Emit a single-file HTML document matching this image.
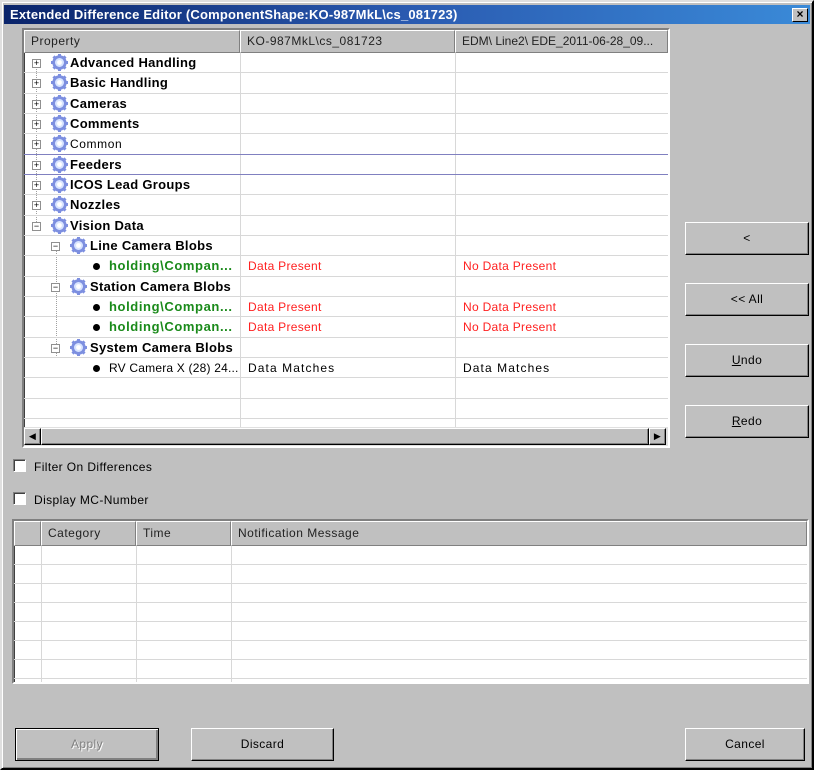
<!DOCTYPE html>
<html><head><style>
*{box-sizing:border-box;margin:0;padding:0}
body{width:814px;height:770px;background:#c0c0c0;font-family:"Liberation Sans","DejaVu Sans",sans-serif;font-size:12px;position:relative;overflow:hidden;color:#000}
.abs{position:absolute}
.win{position:absolute;left:0;top:0;width:814px;height:770px;border:2px solid;border-color:#dfdfdf #000 #000 #dfdfdf;box-shadow:inset 1px 1px #fff,inset -1px -1px #808080}
.title{position:absolute;left:4px;top:5px;width:806px;height:19px;background:linear-gradient(to right,#0a246a,#2a5ab0 50%,#3a8ad8);color:#fff;font-weight:bold;font-size:13px;line-height:19px;padding-left:6px;letter-spacing:0.2px}
.close{position:absolute;right:6px;top:8px;width:16px;height:14px;background:#c0c0c0;border:1px solid;border-color:#fff #000 #000 #fff;font-size:12px;line-height:11px;text-align:center;font-weight:bold;color:#000}
.sunken{border:2px solid;border-color:#808080 #fff #fff #808080;box-shadow:inset 1px 1px #404040}
.btn{position:absolute;background:#c0c0c0;border:1px solid;border-color:#fff #000 #000 #fff;box-shadow:inset -1px -1px #808080;text-align:center;font-size:12px;letter-spacing:0.4px}
.hdr{position:absolute;top:0;height:23px;background:#c0c0c0;border:1px solid;border-color:#fff #808080 #808080 #fff;line-height:21px;padding-left:6px;color:#222;letter-spacing:0.5px;white-space:nowrap;overflow:hidden}
.row{position:absolute;left:0;height:20.33px;width:644px;border-bottom:1px solid #d8d8d8}
.c{position:absolute;top:0;height:20px;line-height:20px;white-space:nowrap;letter-spacing:1.1px}
.vl{position:absolute;top:0;bottom:0;width:1px;background:#d8d8d8}
.b{font-weight:bold;font-size:13px;letter-spacing:0.3px}
.g{color:#1a8a1a;letter-spacing:0.6px}
.r{color:#ff2020;letter-spacing:0.3px}
.exp{position:absolute;width:9px;height:9px;border:1px solid #909090;background:#fff;font-size:9px;line-height:7px;text-align:center;top:6px;color:#000}
.gear{position:absolute;top:1px;width:17px;height:17px}
.dot{position:absolute;top:7px;width:7px;height:7px;border-radius:50%;background:#000}
.cb{position:absolute;width:13px;height:13px;background:#fff;border:1px solid;border-color:#808080 #fff #fff #808080;box-shadow:inset 1px 1px #404040}
.dl{position:absolute;border-left:1px dotted #a0a0a0;border-bottom:1px dotted #a0a0a0}
</style></head><body>
<div class="win"></div>
<div class="title">Extended Difference Editor (ComponentShape:KO-987MkL\cs_081723)</div>
<div class="close">×</div>

<div class="abs sunken" style="left:22px;top:28px;width:648px;height:420px;background:#fff">
 <div class="abs" style="left:0;top:0;width:644px;height:416px;overflow:hidden">
  <div class="hdr" style="left:0;width:216px">Property</div>
  <div class="hdr" style="left:216px;width:215px">KO-987MkL\cs_081723</div>
  <div class="hdr" style="left:431px;width:213px;letter-spacing:0">EDM\ Line2\ EDE_2011-06-28_09...</div>
  <div class="abs" style="left:0;top:23px;width:644px;height:374px">
   <div class="vl" style="left:216px"></div><div class="vl" style="left:431px"></div>
   <svg width="0" height="0" style="position:absolute"><defs><g id="gr"><circle cx="8.5" cy="8.5" r="7.2" fill="#7d8fe0"/><g fill="#7d8fe0"><rect x="7" y="0" width="3" height="17"/><rect x="0" y="7" width="17" height="3"/><rect x="7" y="0" width="3" height="17" transform="rotate(45 8.5 8.5)"/><rect x="7" y="0" width="3" height="17" transform="rotate(-45 8.5 8.5)"/></g><circle cx="8.5" cy="8.5" r="4.5" fill="#d8e4ff"/><circle cx="8.5" cy="8.5" r="2.4" fill="#fff"/></g></defs></svg>
   <div class="dl" style="left:12px;top:10px;width:1px;height:163px"></div>
   <div class="dl" style="left:32px;top:193px;width:1px;height:112px"></div>
   <div class="row" style="top:0"><div class="exp" style="left:8px">+</div><svg class="gear" style="left:27px"><use href="#gr"/></svg><div class="c b" style="left:46px">Advanced Handling</div></div>
   <div class="row" style="top:20.33px"><div class="exp" style="left:8px">+</div><svg class="gear" style="left:27px"><use href="#gr"/></svg><div class="c b" style="left:46px">Basic Handling</div></div>
   <div class="row" style="top:40.66px"><div class="exp" style="left:8px">+</div><svg class="gear" style="left:27px"><use href="#gr"/></svg><div class="c b" style="left:46px">Cameras</div></div>
   <div class="row" style="top:61px"><div class="exp" style="left:8px">+</div><svg class="gear" style="left:27px"><use href="#gr"/></svg><div class="c b" style="left:46px">Comments</div></div>
   <div class="row" style="top:81.33px;border-bottom:1px solid #8080c0"><div class="exp" style="left:8px">+</div><svg class="gear" style="left:27px"><use href="#gr"/></svg><div class="c" style="left:46px;letter-spacing:0.6px">Common</div></div>
   <div class="row" style="top:101.66px;border-bottom:1px solid #8080c0"><div class="exp" style="left:8px">+</div><svg class="gear" style="left:27px"><use href="#gr"/></svg><div class="c b" style="left:46px">Feeders</div></div>
   <div class="row" style="top:122px"><div class="exp" style="left:8px">+</div><svg class="gear" style="left:27px"><use href="#gr"/></svg><div class="c b" style="left:46px">ICOS Lead Groups</div></div>
   <div class="row" style="top:142.33px"><div class="exp" style="left:8px">+</div><svg class="gear" style="left:27px"><use href="#gr"/></svg><div class="c b" style="left:46px">Nozzles</div></div>
   <div class="row" style="top:162.66px"><div class="exp" style="left:8px">−</div><svg class="gear" style="left:27px"><use href="#gr"/></svg><div class="c b" style="left:46px">Vision Data</div></div>
   <div class="row" style="top:183px"><div class="exp" style="left:27px">−</div><svg class="gear" style="left:46px"><use href="#gr"/></svg><div class="c b" style="left:66px">Line Camera Blobs</div></div>
   <div class="row" style="top:203.33px"><div class="dot" style="left:69px"></div><div class="c b g" style="left:85px">holding\Compan...</div><div class="c r" style="left:224px">Data Present</div><div class="c r" style="left:439px">No Data Present</div></div>
   <div class="row" style="top:223.66px"><div class="exp" style="left:27px">−</div><svg class="gear" style="left:46px"><use href="#gr"/></svg><div class="c b" style="left:66px">Station Camera Blobs</div></div>
   <div class="row" style="top:244px"><div class="dot" style="left:69px"></div><div class="c b g" style="left:85px">holding\Compan...</div><div class="c r" style="left:224px">Data Present</div><div class="c r" style="left:439px">No Data Present</div></div>
   <div class="row" style="top:264.33px"><div class="dot" style="left:69px"></div><div class="c b g" style="left:85px">holding\Compan...</div><div class="c r" style="left:224px">Data Present</div><div class="c r" style="left:439px">No Data Present</div></div>
   <div class="row" style="top:284.66px"><div class="exp" style="left:27px">−</div><svg class="gear" style="left:46px"><use href="#gr"/></svg><div class="c b" style="left:66px">System Camera Blobs</div></div>
   <div class="row" style="top:305px"><div class="dot" style="left:69px"></div><div class="c" style="left:85px;letter-spacing:0.2px">RV Camera X (28) 24...</div><div class="c" style="left:224px">Data Matches</div><div class="c" style="left:439px">Data Matches</div></div>
   <div class="row" style="top:325.33px"></div>
   <div class="row" style="top:345.66px"></div>
  </div>
  <div class="abs" style="left:0;top:397px;width:644px;height:19px;background:#e0e0e0">
   <div class="btn" style="left:0;top:1px;width:17px;height:17px;font-size:9px;line-height:15px">◀</div>
   <div class="btn" style="left:17px;top:1px;width:608px;height:17px"></div>
   <div class="btn" style="left:625px;top:1px;width:17px;height:17px;font-size:9px;line-height:15px">▶</div>
  </div>
 </div>
</div>

<div class="btn" style="left:685px;top:222px;width:124px;height:33px;line-height:31px">&lt;</div>
<div class="btn" style="left:685px;top:283px;width:124px;height:33px;line-height:31px">&lt;&lt; All</div>
<div class="btn" style="left:685px;top:344px;width:124px;height:33px;line-height:31px"><u>U</u>ndo</div>
<div class="btn" style="left:685px;top:405px;width:124px;height:33px;line-height:31px"><u>R</u>edo</div>

<div class="cb" style="left:13px;top:459px"></div><div class="abs" style="left:34px;top:460px;letter-spacing:0.4px">Filter On Differences</div>
<div class="cb" style="left:13px;top:492px"></div><div class="abs" style="left:34px;top:493px;letter-spacing:0.4px">Display MC-Number</div>

<div class="abs sunken" style="left:12px;top:519px;width:797px;height:165px;background:#fff">
 <div class="abs" style="left:0;top:0;width:793px;height:161px;overflow:hidden">
  <div class="hdr" style="left:0;width:27px;height:25px"></div>
  <div class="hdr" style="left:27px;width:95px;height:25px;line-height:23px">Category</div>
  <div class="hdr" style="left:122px;width:95px;height:25px;line-height:23px">Time</div>
  <div class="hdr" style="left:217px;width:576px;height:25px;line-height:23px">Notification Message</div>
  <div class="vl" style="left:27px;top:25px"></div><div class="vl" style="left:122px;top:25px"></div><div class="vl" style="left:217px;top:25px"></div>
  <div class="abs" style="left:0;top:25px;width:793px;height:140px;background:repeating-linear-gradient(to bottom,transparent 0,transparent 18px,#d8d8d8 18px,#d8d8d8 19px)"></div>
 </div>
</div>

<div class="btn" style="left:15px;top:728px;width:144px;height:33px;line-height:31px;color:#808080;text-shadow:1px 1px #fff;border-color:#000;box-shadow:inset 1px 1px #fff,inset -2px -2px #808080">Apply</div>
<div class="btn" style="left:191px;top:728px;width:143px;height:33px;line-height:31px">Discard</div>
<div class="btn" style="left:685px;top:728px;width:120px;height:33px;line-height:31px">Cancel</div>
</body></html>
